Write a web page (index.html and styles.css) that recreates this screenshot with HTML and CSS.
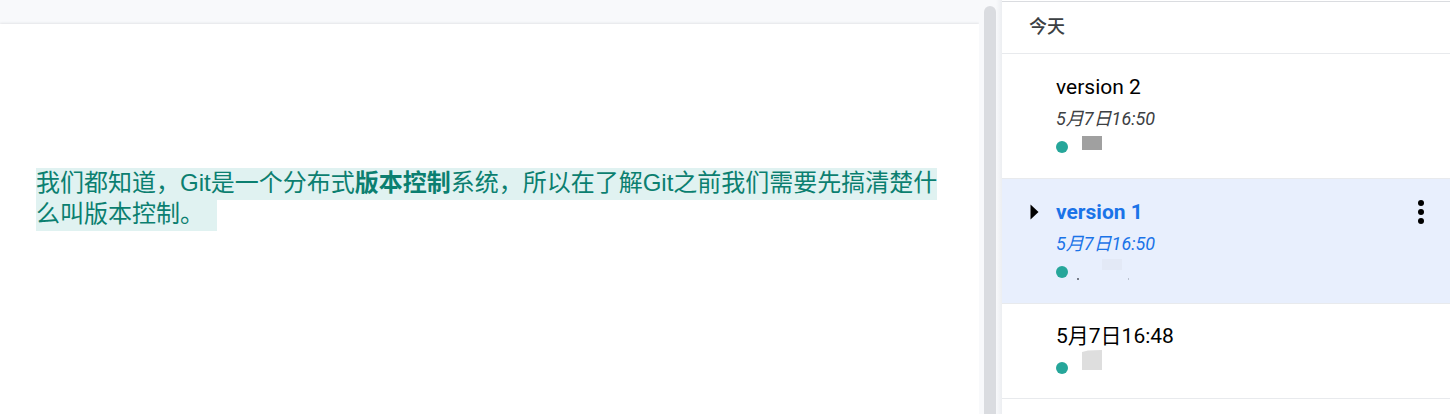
FILE: index.html
```html
<!DOCTYPE html>
<html lang="zh-CN">
<head>
<meta charset="utf-8">
<title>版本记录</title>
<link rel="stylesheet" href="styles.css">
</head>
<body>
<div class="app">
  <main class="editor">
    <article class="page">
      <p class="text"><span class="added">我们都知道，Git是一个分布式<strong>版本控制</strong>系统，所以在了解Git之前我们需要先搞清楚什么叫版本控制。&nbsp;&nbsp;</span></p>
    </article>
    <div class="track"><div class="thumb"></div></div>
  </main>
  <aside class="history">
    <h2 class="day">今天</h2>
    <ul class="versions">
      <li class="version">
        <span class="lead"></span>
        <div class="info">
          <h3 class="name">version 2</h3>
          <time class="time">5月7日16:50</time>
          <div class="author"><span class="dot"></span><svg class="mask" viewBox="0 0 80 24"><path d="M14 1h20v14H14z" fill="#a0a0a0"/></svg></div>
        </div>
      </li>
      <li class="version selected">
        <button class="lead" type="button" aria-label="展开"><svg class="arrow" viewBox="0 0 8 16"><path d="M0 0.500L8 8L0 15.500z"/></svg></button>
        <div class="info">
          <h3 class="name">version 1</h3>
          <time class="time">5月7日16:50</time>
          <div class="author"><span class="dot"></span><svg class="mask" viewBox="0 0 80 24"><path d="M34 -1h20v11H34z" fill="#e3e9f6"/><path d="M9 18h2v2H9z" fill="#777c88"/><path d="M60 18h1v2h-1z" fill="#b9c0ce"/></svg></div>
        </div>
        <button class="more" type="button" aria-label="更多操作"><svg class="dots" viewBox="0 0 6 24"><circle cx="3" cy="3" r="3"/><circle cx="3" cy="12" r="3"/><circle cx="3" cy="21" r="3"/></svg></button>
      </li>
      <li class="version untitled">
        <span class="lead"></span>
        <div class="info">
          <h3 class="name">5月7日16:48</h3>
          <div class="author"><span class="dot"></span><svg class="mask" viewBox="0 0 80 24"><path d="M14 -4L20 -5.500L34 -6v20H14z" fill="#dedede"/></svg></div>
        </div>
      </li>
    </ul>
  </aside>
</div>
</body>
</html>
```

FILE: styles.css
```css
* {
  box-sizing: border-box;
}

body {
  margin: 0;
  background: #fff;
  font-family: Roboto, "Noto Sans CJK SC", sans-serif;
}

h2, h3, p, ul {
  margin: 0;
  padding: 0;
}

button {
  padding: 0;
  border: 0;
  background: none;
}

.app {
  display: flex;
  min-height: 100vh;
}

.editor {
  display: flex;
  flex: 1;
  min-width: 0;
  background: #f8f9fb;
}

.page {
  flex: 1;
  margin-top: 24px;
  padding: 143px 30px 40px 36px;
  background: #fff;
  box-shadow: 0 -1px 2px #e4e5e8;
  clip-path: inset(-3px 0 0 0);
}

.text {
  color: #0b7f70;
  font-family: "Liberation Sans", "Noto Sans CJK SC", sans-serif;
  font-size: 24px;
  line-height: 31px;
}

.added {
  padding: 1px 0 4px;
  background: #e0f2f1;
}

.track {
  display: flex;
  width: 23px;
  padding: 6px 6px 0 5px;
  background: linear-gradient(to right, #f8f9fb 17px, #eceef1);
}

.thumb {
  flex: 1;
  border-radius: 6px 6px 0 0;
  background: #dadce0;
}

.history {
  width: 448px;
  margin-top: 1px;
  border-top: 1px solid #dadce0;
}

.day {
  padding: 13px 27px 14px;
  border-bottom: 1px solid #e8eaed;
  color: #3c4043;
  font-size: 18px;
  font-weight: 500;
  line-height: 24px;
}

.versions {
  list-style: none;
}

.version {
  display: flex;
  align-items: flex-start;
  padding: 20px 26px 19px 28px;
  border-bottom: 1px solid #e8eaed;
}

.selected {
  background: #e8effd;
}

.untitled {
  padding-top: 19px;
  padding-bottom: 18px;
}

.untitled .author {
  margin-top: 7px;
}

.lead {
  display: flex;
  align-items: center;
  width: 26px;
  height: 26px;
}

.arrow {
  width: 9px;
  height: 16px;
}

.info {
  flex: 1;
}

.name {
  color: #000;
  font-size: 21px;
  font-weight: 400;
  line-height: 26px;
}

.time {
  display: block;
  margin: 6px 0 4px;
  color: #3c4043;
  font-size: 18px;
  font-style: italic;
  line-height: 25px;
}

.selected .name {
  color: #1a73e8;
  font-weight: 700;
}

.selected .time {
  color: #1a73e8;
}

.author {
  display: flex;
  align-items: center;
  height: 24px;
}

.dot {
  width: 12px;
  height: 12px;
  border-radius: 50%;
  background: #26a69a;
}

.mask {
  width: 80px;
  height: 24px;
  overflow: visible;
}

.more {
  display: flex;
  justify-content: center;
  align-items: center;
  width: 6px;
  height: 26px;
}

.dots {
  width: 6px;
  height: 24px;
}
```
